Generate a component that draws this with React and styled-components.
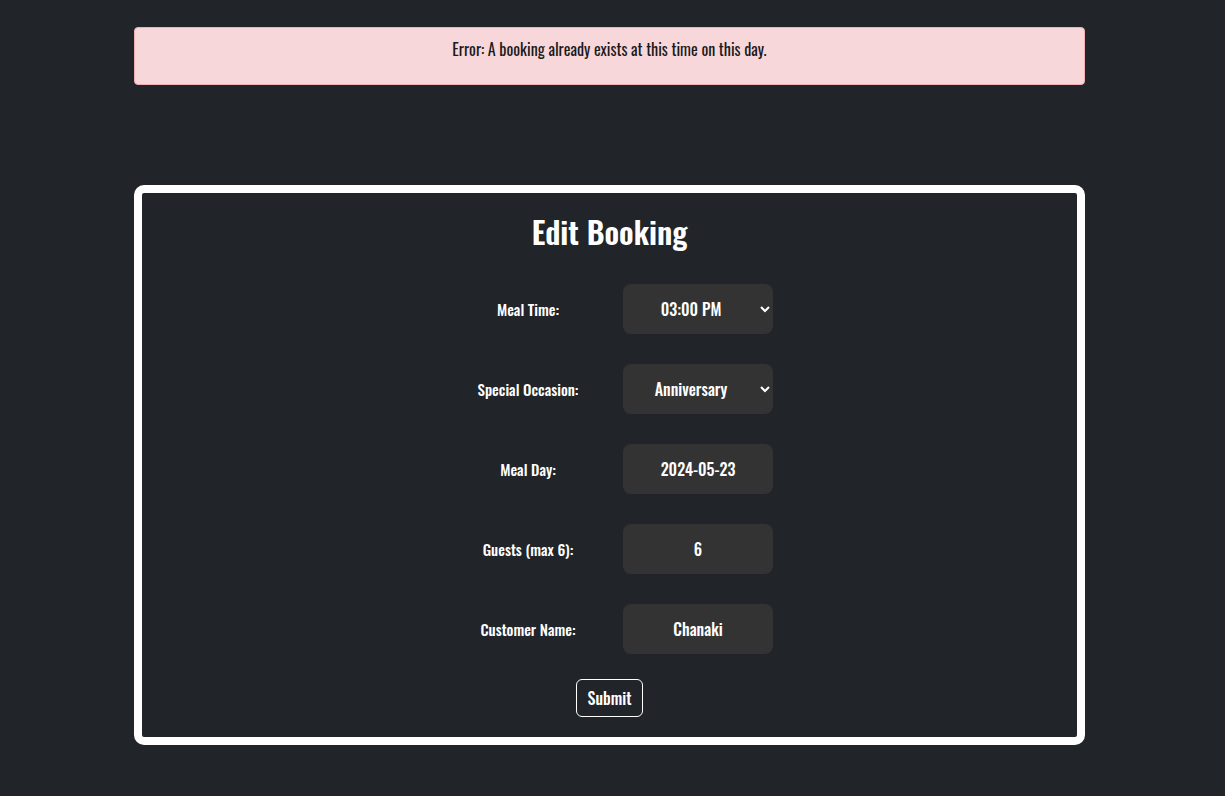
import styled, { createGlobalStyle } from "styled-components";

const GlobalStyle = createGlobalStyle`
  html, body {
    margin: 0;
    padding: 0;
    background: #212428;
    min-height: 100%;
  }
  body {
    font-family: "Oswald", "Liberation Sans Narrow", "DejaVu Sans Condensed", "Liberation Sans", sans-serif;
  }
`;

const rows = [
  { label: "Meal Time:", type: "select", value: "03:00 PM", options: ["12:00 PM", "01:00 PM", "02:00 PM", "03:00 PM", "04:00 PM"] },
  { label: "Special Occasion:", type: "select", value: "Anniversary", options: ["None", "Birthday", "Anniversary"] },
  { label: "Meal Day:", type: "text", value: "2024-05-23" },
  { label: "Guests (max 6):", type: "text", value: "6" },
  { label: "Customer Name:", type: "text", value: "Chanaki" },
];

export default function App() {
  return (
    <Page>
      <GlobalStyle />
      <Alert>Error: A booking already exists at this time on this day.</Alert>
      <Card>
        <Title>Edit Booking</Title>
        <Form onSubmit={(e) => e.preventDefault()}>
          {rows.map((r) => (
            <Row key={r.label}>
              <Label>{r.label}</Label>
              {r.type === "select" ? (
                <Select defaultValue={r.value}>
                  {r.options.map((o) => (
                    <option key={o}>{o}</option>
                  ))}
                </Select>
              ) : (
                <Input type="text" defaultValue={r.value} />
              )}
            </Row>
          ))}
          <SubmitBtn type="submit">Submit</SubmitBtn>
        </Form>
      </Card>
    </Page>
  );
}

const Page = styled.div`
  padding: 27px 140px 40px 134px;
  display: flex;
  flex-direction: column;
  gap: 100px;
`;

const Alert = styled.div`
  box-sizing: border-box;
  height: 58px;
  padding: 9px 16px;
  background: #f8d7da;
  border: 1px solid #f1aeb5;
  border-radius: 4px;
  color: #1a1a1a;
  text-align: center;
  font-size: 16px;
  font-weight: 400;
`;

const Card = styled.div`
  box-sizing: border-box;
  height: 560px;
  border: 8px solid #ffffff;
  border-radius: 10px;
  display: flex;
  flex-direction: column;
  align-items: center;
  padding-top: 14px;
`;

const Title = styled.h1`
  margin: 0 0 29px;
  color: #ffffff;
  font-size: 31px;
  font-weight: 600;
  line-height: 48px;
`;

const Form = styled.form`
  display: flex;
  flex-direction: column;
  align-items: center;
  gap: 30px;
`;

const Row = styled.div`
  display: grid;
  grid-template-columns: 164px 150px;
  column-gap: 13px;
  align-items: center;
`;

const Label = styled.label`
  color: #ffffff;
  font-size: 15px;
  font-weight: 500;
  text-align: center;
`;

const fieldCss = `
  box-sizing: border-box;
  width: 150px;
  height: 50px;
  border: none;
  border-radius: 8px;
  background: #333333;
  color: #ffffff;
  font-family: inherit;
  font-size: 16px;
  font-weight: 500;
  text-align: center;
  outline: none;
`;

const Select = styled.select`
  ${fieldCss}
  color-scheme: dark;
  text-align-last: center;
  padding: 0 8px 0 6px;
`;

const Input = styled.input`
  ${fieldCss}
  padding: 0 10px;
`;

const SubmitBtn = styled.button`
  margin-top: -5px;
  height: 38px;
  padding: 0 11px;
  background: transparent;
  color: #ffffff;
  border: 1px solid #ffffff;
  border-radius: 6px;
  font-family: inherit;
  font-size: 16px;
  font-weight: 500;
  cursor: pointer;
`;
